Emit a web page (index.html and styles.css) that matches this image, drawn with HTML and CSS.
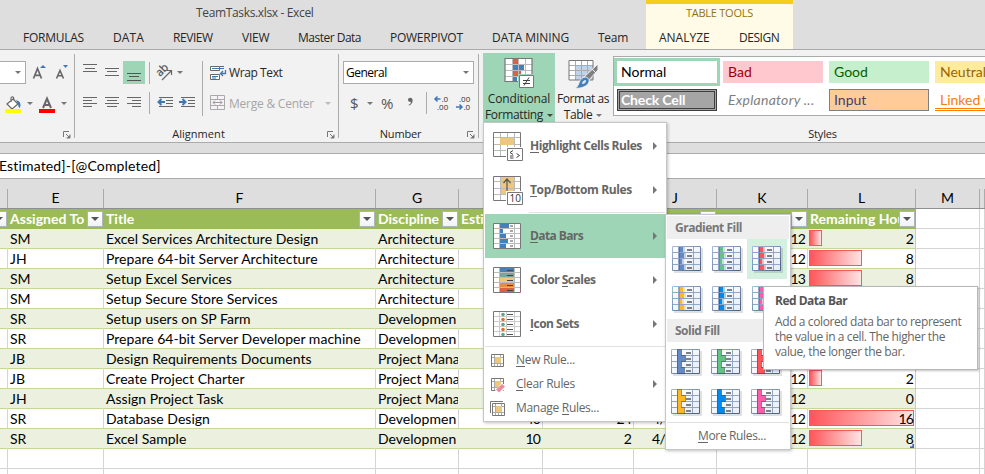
FILE: index.html
```html
<!DOCTYPE html>
<html lang="en">
<head>
<meta charset="utf-8">
<title>TeamTasks.xlsx - Excel</title>
<link rel="stylesheet" href="styles.css">
</head>
<body>
<svg class="defs" aria-hidden="true">
  <defs>
    <linearGradient id="cellbg" x1="0" y1="0" x2="1" y2="1"><stop offset="0" stop-color="#fff"/><stop offset="1" stop-color="#e6edf8"/></linearGradient>
    <linearGradient id="frame" x1="0" y1="0" x2="1" y2="1"><stop offset="0" stop-color="#a9bbd8"/><stop offset="1" stop-color="#47617f"/></linearGradient>
    <symbol id="lines" viewBox="0 0 31 27">
      <path d="M2 2h29v25H2z" fill="#000" opacity=".12"/>
      <path d="M.5.5h28v24H.5z" fill="url(#cellbg)" stroke="url(#frame)"/>
      <path d="M1 6.500h27M1 12.500h27M1 18.500h27M6.500 1v23M21.500 1v23" fill="none" stroke="#93a5c6"/>
      <path d="M15 4h5M15 10h5M15 16h5M15 22h5" stroke="#7d8085" stroke-width="2"/>
    </symbol>
    <symbol id="grad" viewBox="0 0 31 27">
      <use href="#lines" width="31" height="27"/>
      <path d="M7 1h4v5H7zM7 7h5v5H7zM7 13h3v5H7zM7 19h5v5H7z" fill="currentColor"/>
      <path d="M11 1h2v5h-2zM12 7h2v5h-2zM10 13h2v5h-2zM12 19h2v5h-2z" fill="currentColor" opacity=".35"/>
      <path d="M7.500 1v23" stroke="#000" stroke-opacity=".18"/>
    </symbol>
    <symbol id="solid" viewBox="0 0 31 27">
      <use href="#lines" width="31" height="27"/>
      <path d="M6.500.5h4v6h4v6h-4v6h3v6h-7z" fill="currentColor"/>
      <path d="M6.500.5h4v6h4v6h-4v6h3v6h-7z" fill="none" stroke="#000" stroke-opacity=".32"/>
    </symbol>
    <symbol id="launch" viewBox="0 0 8 8">
      <path d="M.5 6V.5H6M3 3l3.500 3.500M7 3.500V7H3.500" fill="none" stroke="#777"/><path d="M7 4v3H4z" fill="#777"/>
    </symbol>
    <symbol id="rule" viewBox="0 0 15 15">
      <path d="M1.500 1.500h12v12h-12z" fill="#fff" stroke="#777"/>
      <path d="M4.500 2v11M10.500 2v11M2 4.500h11M2 10.500h11M7.500 10v3" fill="none" stroke="#aaa"/>
      <path d="M5 4h6v6H5z" fill="#edc77c"/>
    </symbol>
  </defs>
</svg>

<div class="window">
  <header class="top">
    <div class="doc-title">TeamTasks.xlsx - Excel</div>
    <nav class="tabs">
      <span class="tab w61">FORMULAS</span><span class="tab w31">DATA</span><span class="tab w40">REVIEW</span><span class="tab w27">VIEW</span><span class="tab w63">Master Data</span><span class="tab w73">POWERPIVOT</span><span class="tab w77">DATA MINING</span><span class="tab w30">Team</span>
    </nav>
    <div class="context">
      <div class="context-title">TABLE TOOLS</div>
      <div class="context-tabs"><span class="tab w51">ANALYZE</span><span class="tab w40">DESIGN</span></div>
    </div>
  </header>

  <section class="ribbon">
    <div class="group font-group">
      <div class="tool-row">
        <div class="size-box"><i class="down"></i></div>
        <svg class="grow" width="16" height="18" viewBox="0 0 16 18"><path d="M1.500 15.500L5.500 5.500l4 10M2.800 12.300h5.500" fill="none" stroke="#666" stroke-width="1.700"/><path d="M8 5l3-3 3 3z" fill="#3f78b8"/></svg>
        <svg class="shrink" width="16" height="18" viewBox="0 0 16 18"><path d="M1.500 15.500L5 7.500l3.500 8M2.800 12.800h4.500" fill="none" stroke="#666" stroke-width="1.600"/><path d="M8 2h5l-2.500 3z" fill="#3f78b8"/></svg>
      </div>
      <div class="tool-row low">
        <svg class="bucket" width="18" height="18" viewBox="0 0 18 18"><path d="M3 8l6-5 5 5-6 5zM7 6V2.500q0-2 2-1.500 1 .5 1 4" fill="#fff" stroke="#666" stroke-width="1.200"/><path d="M12 4q6 1 4 8-2-1-2-4z" fill="#3f78b8"/><path d="M1 13h16v4H1z" fill="#ff0"/></svg>
        <i class="down"></i>
        <svg class="fontcolor" width="18" height="18" viewBox="0 0 18 18"><path d="M5 12L9 2.500l4 9.500M6.500 9h5" fill="none" stroke="#666" stroke-width="2"/><path d="M1 13h16v4H1z" fill="#f00"/></svg>
        <i class="down"></i>
      </div>
      <svg class="launcher" width="8" height="8"><use href="#launch"/></svg>
    </div>

    <div class="group align-group">
      <div class="align-body">
        <div class="align-left">
          <div class="tool-row">
            <svg width="22" height="23"><path d="M4 3.500h14M6 7.500h10M4 10.500h14" stroke="#666"/></svg>
            <svg width="22" height="23"><path d="M4 7.500h14M6 10.500h10M4 14.500h14" stroke="#666"/></svg>
            <svg class="on" width="22" height="23"><path d="M4 12.500h14M6 15.500h10M4 19.500h14" stroke="#555"/></svg>
            <b class="bar"></b>
            <svg class="orient" width="20" height="22" viewBox="0 0 20 22"><text x="0" y="0" transform="translate(5 15) rotate(-45)" class="ab">ab</text><path d="M7 18L16 9M12 8.500h4.500V13" fill="none" stroke="#666" stroke-width="1.200"/></svg>
            <i class="down"></i>
          </div>
          <div class="tool-row low">
            <svg width="22" height="22"><path d="M4 5.500h14M4 8.500h9M4 11.500h14M4 14.500h9" stroke="#666"/></svg>
            <svg width="22" height="22"><path d="M4 5.500h14M6 8.500h10M4 11.500h14M6 14.500h10" stroke="#666"/></svg>
            <svg width="22" height="22"><path d="M4 5.500h14M9 8.500h9M4 11.500h14M9 14.500h9" stroke="#666"/></svg>
            <b class="bar"></b>
            <svg class="indent" width="22" height="22"><path d="M2 5.500h14M9 8.500h7M9 11.500h7M2 14.500h14" stroke="#666"/><path d="M8 10H2M4.500 7l-3 3 3 3" fill="none" stroke="#3f78b8" stroke-width="2"/></svg>
            <svg width="22" height="22"><path d="M2 5.500h14M9 8.500h7M9 11.500h7M2 14.500h14" stroke="#666"/><path d="M0 10h6M3.500 7l3 3-3 3" fill="none" stroke="#3f78b8" stroke-width="2"/></svg>
          </div>
        </div>
        <div class="align-right">
          <div class="tool-row">
            <svg width="17" height="16" viewBox="0 0 17 16"><path d="M.5 1.500h9v4h-9zM.5 9.500h9v5h-9z" fill="#fff" stroke="#666"/><path d="M2 3.500h12M2 11.500h6M2 13h4" stroke="#3f78b8"/><path d="M10 1.500h4" stroke="#666"/><path d="M15.500 5v3.500H11M13 6l-2.500 2.500L13 11" fill="none" stroke="#3f78b8" stroke-width="1.300"/></svg>
            <span class="wrap-label">Wrap Text</span>
          </div>
          <div class="tool-row low disabled">
            <svg width="17" height="16" viewBox="0 0 17 16"><path d="M.5.500h14v14H.5zM.5 4.500h14M.5 10.500h14M7.500 1v3M7.500 11v3" fill="#f7f2f7" stroke="#aaa"/><path d="M3 7.500h9M5 5.500l-2 2 2 2M10 5.500l2 2-2 2" fill="none" stroke="#999"/></svg>
            <span class="merge-label">Merge &amp; Center</span><i class="down"></i>
          </div>
        </div>
      </div>
      <div class="group-label">Alignment</div>
      <svg class="launcher" width="8" height="8"><use href="#launch"/></svg>
    </div>

    <div class="group number-group">
      <div class="format-box"><span>General</span><i class="down"></i></div>
      <div class="tool-row low number-tools">
        <span class="sym">$</span><i class="down"></i><span class="sym pct">%</span><svg class="comma" width="7" height="9" viewBox="0 0 7 9"><path d="M1.500 8Q4 7 4 5 1 5 1 2.800 1 .8 3.200.8 5.600.8 5.600 3.500 5.600 7 2 8.500z" fill="#666"/></svg><b class="bar"></b>
        <svg width="16" height="16" viewBox="0 0 16 16"><path d="M6.500 4H1M3.500 1.500L1 4l2.500 2.500" fill="none" stroke="#3f78b8" stroke-width="1.500"/><text class="dec" x="7.500" y="7">.0</text><text class="dec" x="3" y="15">.00</text></svg>
        <svg class="dec2" width="16" height="16" viewBox="0 0 16 16"><path d="M0 12h6M3.500 9.500L6 12l-2.500 2.500" fill="none" stroke="#3f78b8" stroke-width="1.500"/><text class="dec" x="3" y="7">.00</text><text class="dec" x="7.500" y="15">.0</text></svg>
      </div>
      <div class="group-label">Number</div>
      <svg class="launcher" width="8" height="8"><use href="#launch"/></svg>
    </div>

    <div class="group styles-group">
      <div class="styles-body">
        <div class="big-btn active">
          <svg width="32" height="32" viewBox="0 0 32 32"><path d="M2 1h27v24H2z" fill="#fff"/><path d="M9 2h6v5H9zM9 13h9v6H9z" fill="#dc6144"/><path d="M9 7h12v6H9zM9 19h5v5H9z" fill="#4680ba"/><path d="M2 7.500h27M2 13.500h27M2 19.500h27M9.500 1v24M15.500 1v24M22.500 1v24" stroke="#bbb"/><path d="M2 1.500h27v23H2z" fill="none" stroke="#777" stroke-width="1.200"/><path d="M15 17h17v15H15z" fill="#9fd5b7"/><path d="M16.500 18.500h14v12h-14z" fill="#fff" stroke="#777"/><path d="M20 23.500h7M20 26.500h7M26 20.500l-5 8" stroke="#444"/></svg>
          <span class="l1">Conditional</span><span class="l2">Formatting<i class="down"></i></span>
        </div>
        <div class="big-btn table-btn">
          <svg width="32" height="32" viewBox="0 0 32 32"><path d="M2 3h24v20H2z" fill="#fff"/><path d="M8 8h18v15H8z" fill="#bfd3ea"/><path d="M2 8.500h24M2 13.500h24M2 18.500h24M8.500 3v20M14.500 3v20M20.500 3v20" stroke="#aaa"/><path d="M2 3.500h24v19.500H2z" fill="none" stroke="#777"/><path d="M31 7v6L21 24l-4-4z" fill="#808080" stroke="#f2f2f2"/><path d="M25 12l4 4" stroke="#f2f2f2"/><path d="M19 20q5 2 2 7-5 5-13 4 3-1 4-5 2-6 7-6z" fill="#4680ba" stroke="#f2f2f2" stroke-width=".8"/><path d="M18 23q-3 1-3 4 4 0 4-4" fill="#dceaf6"/></svg>
          <span class="l1">Format as</span><span class="l2">Table<i class="down"></i></span>
        </div>
        <div class="gallery">
          <div class="sty normal">Normal</div><div class="sty bad">Bad</div><div class="sty good">Good</div><div class="sty neutral">Neutral</div>
          <div class="sty check">Check Cell</div><div class="sty expl">Explanatory ...</div><div class="sty input">Input</div><div class="sty linked">Linked C</div>
        </div>
      </div>
      <div class="group-label">Styles</div>
    </div>
  </section>

  <div class="formula">Estimated]-[@Completed]</div>

  <main class="sheet">
    <div class="row letters"><span></span><span>E</span><span>F</span><span>G</span><span></span><span></span><span>J</span><span>K</span><span>L</span><span>M</span><span></span></div>
    <div class="row head"><span><i class="filter"></i></span><span>Assigned To<i class="filter"></i></span><span>Title<i class="filter"></i></span><span>Discipline<i class="filter"></i></span><span>Esti</span><span></span><span><i class="filter"></i></span><span><i class="filter"></i></span><span>Remaining Hours<i class="filter"></i></span><span></span><span></span></div>
    <div class="row band"><span></span><span>SM</span><span>Excel Services Architecture Design</span><span>Architecture</span><span></span><span></span><span></span><span class="n">12</span><span class="n last"><i class="databar v2"></i><em>2</em></span><span></span><span></span></div>
    <div class="row"><span></span><span>JH</span><span>Prepare 64-bit Server Architecture</span><span>Architecture</span><span></span><span></span><span></span><span class="n">12</span><span class="n last"><i class="databar v8"></i><em>8</em></span><span></span><span></span></div>
    <div class="row band"><span></span><span>SM</span><span>Setup Excel Services</span><span>Architecture</span><span></span><span></span><span></span><span class="n">13</span><span class="n last"><i class="databar v8"></i><em>8</em></span><span></span><span></span></div>
    <div class="row"><span></span><span>SM</span><span>Setup Secure Store Services</span><span>Architecture</span><span></span><span></span><span></span><span></span><span class="last"></span><span></span><span></span></div>
    <div class="row band"><span></span><span>SR</span><span>Setup users on SP Farm</span><span>Developmen</span><span></span><span></span><span></span><span></span><span class="last"></span><span></span><span></span></div>
    <div class="row"><span></span><span>SR</span><span>Prepare 64-bit Server Developer machine</span><span>Developmen</span><span></span><span></span><span></span><span></span><span class="last"></span><span></span><span></span></div>
    <div class="row band"><span></span><span>JB</span><span>Design Requirements Documents</span><span>Project Mana</span><span></span><span></span><span></span><span></span><span class="last"></span><span></span><span></span></div>
    <div class="row"><span></span><span>JB</span><span>Create Project Charter</span><span>Project Mana</span><span></span><span></span><span></span><span class="n">12</span><span class="n last"><i class="databar v2"></i><em>2</em></span><span></span><span></span></div>
    <div class="row band"><span></span><span>JH</span><span>Assign Project Task</span><span>Project Mana</span><span></span><span></span><span></span><span class="n">12</span><span class="n last"><em>0</em></span><span></span><span></span></div>
    <div class="row"><span></span><span>SR</span><span>Database Design</span><span>Developmen</span><span class="n">40</span><span class="n">24</span><span class="date">4/</span><span class="n">12</span><span class="n last"><i class="databar v16"></i><em>16</em></span><span></span><span></span></div>
    <div class="row band"><span></span><span>SR</span><span>Excel Sample</span><span>Developmen</span><span class="n">10</span><span class="n">2</span><span class="date">4/</span><span class="n">12</span><span class="n last end"><i class="databar v8"></i><em>8</em></span><span></span><span></span></div>
    <div class="row blank"><span></span><span></span><span></span><span></span><span></span><span></span><span></span><span></span><span></span><span></span><span></span></div>
    <div class="row blank"><span></span><span></span><span></span><span></span><span></span><span></span><span></span><span></span><span></span><span></span><span></span></div>
  </main>
</div>

<div class="menu">
  <div class="item"><svg width="31" height="30" viewBox="0 0 31 30"><path d="M.5 1.500h27v24H.5z" fill="#fff"/><path d="M1 6.500h27M1 13.500h27M1 19.500h27M7.500 1v24M14.500 1v24M21.500 1v24" stroke="#bbb"/><path d="M7 7h14v7H7z" fill="#edc77c"/><path d="M.5 1.500h27v24H.5z" fill="none" stroke="#777"/><path d="M13 16h18v14H13z" fill="#fff"/><path d="M14.500 17.500h15v12h-15z" fill="#fff" stroke="#777"/><path d="M20 19.500L17 21.500l3 2M17 25h3.500M17 27h3.500M23.500 22.500l3 2-3 2" fill="none" stroke="#444"/></svg><span class="hl"><u>H</u>ighlight Cells Rules</span><i class="sub"></i></div>
  <div class="item"><svg width="31" height="30" viewBox="0 0 31 30"><path d="M.5 1.500h27v24H.5z" fill="#fff"/><path d="M7 2h14v17H7z" fill="#edc77c"/><path d="M1 6.500h27M1 13.500h27M1 19.500h27M7.500 1v24M21.500 1v24M14.500 19v6" stroke="#bbb"/><path d="M.5 1.500h27v24H.5z" fill="none" stroke="#777"/><path d="M14 16V4M10.500 8L14 4l3.500 4" fill="none" stroke="#555" stroke-width="1.200"/><path d="M13 16h18v14H13z" fill="#fff"/><path d="M14.500 17.500h15v12h-15z" fill="#fff" stroke="#777"/><text x="16.500" y="27" class="ten">10</text></svg><span class="tb"><u>T</u>op/Bottom Rules</span><i class="sub"></i></div>
  <div class="sep short"></div>
  <div class="item active"><svg width="31" height="30" viewBox="0 0 31 30"><path d="M.5 2.500h27v25H.5z" fill="#fff"/><path d="M6 3h10v4H6zM6 8h4v4H6zM6 13h7v4H6zM6 18h9v4H6zM6 23h7v4H6z" fill="#4680ba"/><path d="M1 7.500h27M1 12.500h27M1 17.500h27M1 22.500h27M6.500 3v24M21.500 3v24" stroke="#bbb"/><path d="M17 5h3M17 10h3M17 15h3M17 20h3M17 25h3" stroke="#555"/><path d="M.5 2.500h27v25H.5z" fill="none" stroke="#777"/></svg><span class="db"><u>D</u>ata Bars</span><i class="sub"></i></div>
  <div class="item"><svg width="31" height="30" viewBox="0 0 31 30"><path d="M.5 2.500h27v25H.5z" fill="#fff"/><path d="M7 3h14v5H7z" fill="#4680ba"/><path d="M7 8h14v5H7z" fill="#76a797"/><path d="M7 13h14v5H7z" fill="#edc77c"/><path d="M7 18h14v5H7z" fill="#e58b42"/><path d="M7 23h14v4H7z" fill="#dc6144"/><path d="M1 7.500h27M1 12.500h27M1 17.500h27M1 22.500h27M6.500 3v24M21.500 3v24" stroke="#bbb"/><path d="M14 5.500h6M14 10.500h6M14 15.500h6M14 20.500h6M14 25.500h6" stroke="#444"/><path d="M.5 2.500h27v25H.5z" fill="none" stroke="#777"/></svg><span>Color <u>S</u>cales</span><i class="sub"></i></div>
  <div class="item"><svg width="31" height="30" viewBox="0 0 31 30"><path d="M.5 2.500h27v25H.5z" fill="#fff"/><path d="M1 7.500h27M1 12.500h27M1 17.500h27M1 22.500h27M6.500 3v24M13.500 3v24M21.500 3v24" stroke="#ccc"/><path d="M14 5.500h6M14 10.500h6M14 15.500h6M14 20.500h6M14 25.500h6" stroke="#555"/><g fill="#5fa58b"><circle cx="10" cy="5.500" r="1.800"/><circle cx="10" cy="15.500" r="1.800"/><circle cx="10" cy="25.500" r="1.800"/></g><g fill="#e0722c"><circle cx="10" cy="10.500" r="1.800"/><circle cx="10" cy="20.500" r="1.800"/></g><path d="M.5 2.500h27v25H.5z" fill="none" stroke="#777"/></svg><span class="is"><u>I</u>con Sets</span><i class="sub"></i></div>
  <div class="sep"></div>
  <div class="small"><svg width="15" height="15"><use href="#rule"/></svg><span><u>N</u>ew Rule...</span></div>
  <div class="small"><svg width="15" height="15" viewBox="0 0 15 15"><use href="#rule" width="15" height="15"/><path d="M4 15L6.500 12 11 7h5v4l-6 5z" fill="#fff"/><path d="M6 12.500l6-5.500 3 2.500-6 6z" fill="#ea8d9f"/></svg><span><u>C</u>lear Rules</span><i class="sub"></i></div>
  <div class="small"><svg width="15" height="15" viewBox="0 0 15 15"><path d="M.5 12V.5H13" fill="none" stroke="#777"/><use href="#rule" x="1" y="1" width="15" height="15"/></svg><span>Manage <u>R</u>ules...</span></div>
</div>

<div class="submenu">
  <div class="sub-head">Gradient Fill</div>
  <div class="swatches">
    <div class="c-blue"><svg width="31" height="27"><use href="#grad"/></svg></div><div class="c-green"><svg width="31" height="27"><use href="#grad"/></svg></div><div class="c-red hover"><svg width="31" height="27"><use href="#grad"/></svg></div>
    <div class="c-gold"><svg width="31" height="27"><use href="#grad"/></svg></div><div class="c-sky"><svg width="31" height="27"><use href="#grad"/></svg></div><div class="c-pink"><svg width="31" height="27"><use href="#grad"/></svg></div>
  </div>
  <div class="sub-head">Solid Fill</div>
  <div class="swatches solid">
    <div class="c-blue"><svg width="31" height="27"><use href="#solid"/></svg></div><div class="c-green"><svg width="31" height="27"><use href="#solid"/></svg></div><div class="c-red"><svg width="31" height="27"><use href="#solid"/></svg></div>
    <div class="c-gold"><svg width="31" height="27"><use href="#solid"/></svg></div><div class="c-sky"><svg width="31" height="27"><use href="#solid"/></svg></div><div class="c-pink"><svg width="31" height="27"><use href="#solid"/></svg></div>
  </div>
  <div class="more"><u>M</u>ore Rules...</div>
</div>

<div class="tooltip">
  <div class="tip-title">Red Data Bar</div>
  <p>Add a colored data bar to represent<br>the value in a cell. The higher the<br>value, the longer the bar.</p>
</div>
</body>
</html>
```
FILE: styles.css
```css
* { box-sizing: border-box; }
body { margin: 0; width: 985px; height: 474px; overflow: hidden; position: relative; background: #dedede; font: 12px "Open Sans", "Noto Sans", sans-serif; letter-spacing: -.35px; color: #262626; font-variant-ligatures: none; }
.defs { position: absolute; width: 0; height: 0; }
svg { display: block; flex: none; overflow: visible; }
svg text { letter-spacing: 0; }
.window { height: 474px; overflow: hidden; }
i, em { font-style: normal; }
.down { flex: none; width: 0; height: 0; border: 3px solid transparent; border-top-color: #777; border-bottom: 0; }

/* title bar and tabs */
.top { position: relative; height: 50px; border-bottom: 1px solid #ababab; }
.doc-title { padding-left: 196px; height: 26px; line-height: 26px; color: #444; }
.tabs { display: flex; gap: 29px; padding-left: 23px; height: 23px; line-height: 23px; }
.tab { white-space: nowrap; letter-spacing: -.26px; }
.w61 { width: 61px; }
.w31 { width: 31px; letter-spacing: .1px; }
.w40 { width: 40px; letter-spacing: -.45px; }
.w27 { width: 27px; }
.w63 { width: 63px; letter-spacing: -.5px; }
.w73 { width: 73px; }
.w77 { width: 77px; letter-spacing: -.08px; }
.w30 { width: 30px; }
.w51 { width: 51px; letter-spacing: 0; }
.context { position: absolute; left: 646px; top: 0; width: 147px; height: 49px; background: #fffbe6; border-top: 4px solid #f5cd1d; }
.context-title { height: 22px; line-height: 17px; text-align: center; font-size: 11px; letter-spacing: -.25px; color: #8f7416; }
.context-tabs { display: flex; gap: 29px; padding-left: 13px; line-height: 23px; }

/* ribbon */
.ribbon { display: flex; height: 93px; background: #f2f2f2; border-bottom: 1px solid #ababab; }
.group { position: relative; flex: none; height: 92px; padding-top: 11px; }
.group + .group::before { content: ""; position: absolute; left: -1px; top: 4px; height: 84px; width: 1px; background: #ababab; }
.font-group { width: 75px; }
.align-group { width: 264px; }
.number-group { width: 140px; }
.styles-group { width: 506px; padding-top: 3px; }
.tool-row { display: flex; align-items: center; height: 23px; }
.tool-row.low { height: 22px; margin-top: 8px; }
.size-box { display: flex; align-items: center; justify-content: flex-end; width: 26px; height: 23px; padding-right: 4px; border: 1px solid #ababab; border-left: 0; background: #fff; }
.grow { margin-left: 6px; margin-top: -1px; }
.shrink { margin-left: 7px; margin-top: -1px; }
.bucket { margin-left: 4px; }
.font-group .low .down { margin-left: 5px; }
.font-group .low .fontcolor { margin-left: 5px; }
.font-group .low svg { margin-top: 4px; }
.launcher { position: absolute; right: 4px; top: 81px; }
.group-label { position: absolute; left: 0; right: 0; top: 76px; padding-right: 17px; text-align: center; font-size: 11px; line-height: 16px; letter-spacing: .05px; color: #262626; }
.number-group .group-label { letter-spacing: -.2px; }
.styles-group .group-label { left: 97px; right: -101px; letter-spacing: -.2px; }
.align-body { display: flex; }
.align-left { width: 128px; padding-left: 4px; border-right: 1px solid #ababab; height: 55px; }
.on { background: #9fd5b7; }
.bar { flex: none; width: 1px; height: 22px; margin-left: 4px; background: #ababab; }
.orient { margin-left: 5px; }
.orient + .down { margin-left: 2px; }
.ab { font: 11px "Open Sans"; fill: #555; stroke: #555; stroke-width: .3; }
.indent { margin-left: 7px; }
.align-right { padding-left: 7px; }
.wrap-label { margin-left: 2px; letter-spacing: -.4px; }
.merge-label { margin-left: 2px; letter-spacing: -.23px; }
.disabled { color: #a6a6a6; }
.disabled .down { margin-left: 11px; border-top-color: #bbb; }
.format-box { display: flex; align-items: center; justify-content: space-between; margin-left: 4px; width: 131px; height: 23px; padding: 0 4px 0 2px; border: 1px solid #ababab; background: #fff; color: #000; letter-spacing: -.5px; }
.number-tools { padding-left: 11px; }
.sym { font-size: 15px; line-height: 22px; color: #555; letter-spacing: 0; width: 9px; }
.sym + .down { margin-left: 8px; }
.sym.pct { width: 13px; margin-left: 8px; }
.comma { margin: -4px 0 0 13px; }
.number-tools .bar { margin: 0 7px 0 12px; }
.dec { font: 8px "Open Sans"; fill: #333; }
.dec2 { margin-left: 6px; }
.ten { font: 10px "Open Sans"; fill: #333; }
.styles-body { display: flex; padding-left: 4px; }
.big-btn { flex: none; display: flex; flex-direction: column; align-items: center; width: 72px; height: 69px; padding-top: 4px; line-height: 16px; white-space: nowrap; }
.big-btn.active { background: #9fd5b7; }
.big-btn svg { margin-left: -1px; }
.big-btn .l1 { margin-top: 2px; letter-spacing: -.15px; }
.big-btn .l2 { display: flex; align-items: center; gap: 4px; }
.big-btn.active .down { border-top-color: #444; }
.table-btn { width: 56px; }
.table-btn .l1 { letter-spacing: -.45px; }
.gallery { flex: none; display: grid; grid-template-columns: repeat(4, 100px); grid-template-rows: 22px 22px; gap: 6px; width: 374px; height: 60px; margin: 3px 0 0 2px; padding: 4px 0 0 3px; background: #fff; border: 1px solid #ababab; border-right: 0; overflow: hidden; }
.sty { padding-left: 5px; font: 14px/22px Lato, sans-serif; letter-spacing: 0; white-space: nowrap; }
.normal { outline: 3px solid #9fd5b7; color: #000; padding-left: 4px; }
.bad { background: #ffc7ce; color: #9c0006; }
.good { background: #c6efce; color: #006100; }
.neutral { background: #ffeb9c; color: #9c6500; }
.check { background: #a5a5a5; color: #fff; border: 3px double #3f3f3f; font-weight: 700; padding-left: 1px; line-height: 15px; letter-spacing: -.15px; }
.expl { color: #7f7f7f; font-style: italic; letter-spacing: .25px; }
.input { background: #ffcc99; color: #3f3f76; border: 1px solid #7f7f7f; padding-left: 4px; line-height: 20px; }
.linked { color: #fa7d00; border-bottom: 3px double #ff8001; line-height: 21px; }

/* formula bar */
.formula { height: 26px; margin-top: 10px; line-height: 24px; background: #fff; border: solid #ababab; border-width: 1px 0; color: #000; font-family: Lato, sans-serif; font-size: 14px; letter-spacing: .15px; text-indent: -1px; }

/* worksheet */
.sheet { background: #fff; color: #000; font-family: Lato, sans-serif; font-size: 14px; letter-spacing: .02px; }
.row { display: grid; grid-template-columns: 8px 96px 272px 83px 84px 91px 83px 91px 108px 64px 5px; height: 20px; }
.row > span { position: relative; border-right: 1px solid #d4d4d4; border-bottom: 1px solid #c4d79b; padding-left: 2px; line-height: 20px; white-space: nowrap; overflow: hidden; }
.row > span:nth-child(n+10), .blank > span { border-bottom-color: #d4d4d4; }
.band > span:nth-child(-n+9) { background: #ebf1de; border-right-color: #ebf1de; }
.row > .last, .band > .last:nth-child(9) { border-right-color: #c4d79b; }
.letters { height: 30px; background: #dedede; border-bottom: 1px solid #8f8f8f; padding-top: 10px; }
.letters > span { border-bottom: 0; border-right-color: #ababab; line-height: 18px; text-align: center; padding-left: 0; }
.head > span:nth-child(-n+9) { background: #9bbb59; border-color: #9bbb59; color: #fff; font-weight: 700; }
.filter { position: absolute; right: 0; top: 2px; width: 16px; height: 16px; background: linear-gradient(#fff, #f0f3f7); border: 1px solid #b0b4ba; }
.filter::after { content: ""; position: absolute; left: 3px; top: 5px; border: 4px solid transparent; border-top: 4px solid #555; border-bottom: 0; }
.row > .n { text-align: right; padding-right: 2px; letter-spacing: -.9px; }
.n em { position: relative; }
.date { letter-spacing: -.6px; }
.row > .date { padding-left: 18px; }
.databar { position: absolute; left: 1px; top: 1px; height: 16px; border: 1px solid #ff555a; background: linear-gradient(90deg, #ff555a, #ffe4e4); }
.v2 { width: 13px; }
.v8 { width: 53px; }
.v16 { width: 105px; }
.end::after { content: ""; position: absolute; right: 1px; bottom: 0; width: 4px; height: 4px; background: #3f5fb0; clip-path: polygon(100% 0, 100% 100%, 0 100%, 0 60%, 60% 60%, 60% 0); }

/* menus */
.menu { position: absolute; left: 483px; top: 122px; width: 184px; height: 300px; padding: 1px 1px 0 1px; background: #fff; border: 1px solid #c6c6c6; box-shadow: 1px 1px 3px rgba(0,0,0,.25); color: #666; }
u { text-decoration: none; display: inline-block; line-height: 12px; border-bottom: 1px solid #666; }
.item { display: flex; align-items: center; height: 44px; padding: 0 8px; font-weight: 700; letter-spacing: -.5px; }
.item.active { background: #9fd5b7; }
.item span { flex: 1; margin: -2px 0 0 6px; white-space: nowrap; }
.hl { letter-spacing: -.46px; }
.tb { letter-spacing: -.36px; }
.item .db { letter-spacing: -.6px; }
.sub { width: 0; height: 0; border: 4px solid transparent; border-left-color: #777; border-right: 0; }
.sep { height: 2px; border-top: 1px solid #e1e1e1; }
.sep.short { margin-left: 44px; }
.small { display: flex; align-items: center; height: 24px; padding: 0 8px 0 5px; letter-spacing: -.3px; }
.small span { flex: 1; margin: -2px 0 0 11px; }
.submenu { position: absolute; left: 665px; top: 214px; width: 126px; height: 236px; padding: 1px; background: #fff; border: 1px solid #c6c6c6; box-shadow: 1px 1px 3px rgba(0,0,0,.25); color: #666; }
.sub-head { height: 23px; padding-left: 8px; line-height: 23px; font-weight: 700; letter-spacing: -.5px; color: #777; background: #eee; }
.swatches { display: grid; grid-template-columns: repeat(3, 40px); grid-auto-rows: 40px; }
.swatches > div { display: flex; align-items: center; padding: 1px 0 0 5px; }
.swatches.solid > div { padding: 0 0 0 4px; }
.hover { background: #d3f0e0; }
.c-blue { color: #638ac6; }
.c-green { color: #63c384; }
.c-red { color: #ff555a; }
.c-gold { color: #ffb628; }
.c-sky { color: #008aef; }
.c-pink { color: #ff5cb0; }
.more { border-top: 1px solid #e1e1e1; height: 27px; line-height: 25px; padding-left: 31px; }
.tooltip { position: absolute; left: 763px; top: 286px; width: 215px; height: 84px; padding: 6px 0 0 11px; background: #fff; border: 1px solid #b8b8b8; box-shadow: 1px 1px 2px rgba(0,0,0,.25); color: #666; }
.tip-title { font-weight: 700; line-height: 15px; letter-spacing: -.5px; color: #555; }
.tooltip p { margin: 6px 0 0; line-height: 15px; letter-spacing: -.39px; white-space: nowrap; }
```
